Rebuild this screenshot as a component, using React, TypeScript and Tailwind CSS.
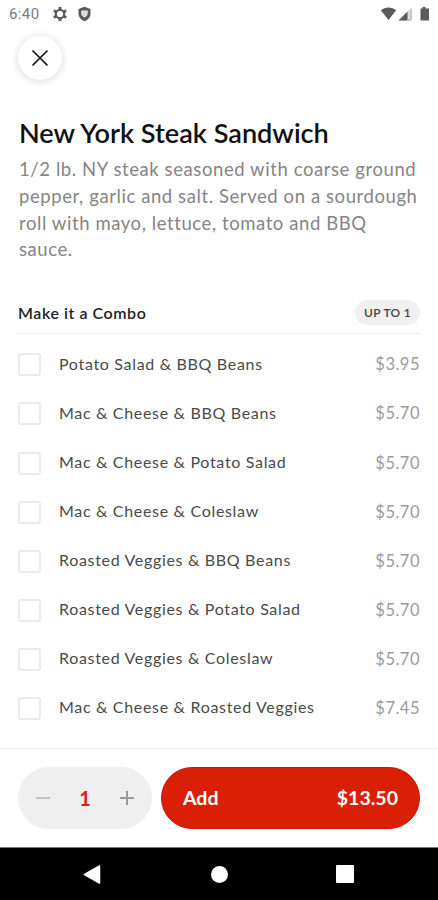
import React, { useState } from "react";

interface ComboOption {
  id: number;
  name: string;
  price: string;
}

const options: ComboOption[] = [
  { id: 1, name: "Potato Salad & BBQ Beans", price: "$3.95" },
  { id: 2, name: "Mac & Cheese & BBQ Beans", price: "$5.70" },
  { id: 3, name: "Mac & Cheese & Potato Salad", price: "$5.70" },
  { id: 4, name: "Mac & Cheese & Coleslaw", price: "$5.70" },
  { id: 5, name: "Roasted Veggies & BBQ Beans", price: "$5.70" },
  { id: 6, name: "Roasted Veggies & Potato Salad", price: "$5.70" },
  { id: 7, name: "Roasted Veggies & Coleslaw", price: "$5.70" },
  { id: 8, name: "Mac & Cheese & Roasted Veggies", price: "$7.45" },
];

const StatusBar: React.FC = () => (
  <div className="flex h-9 shrink-0 items-start justify-between pt-1.5 pl-[9px] pr-[7px] text-[#5c5c5c]">
    <div className="flex h-4 items-center">
      <span className="w-[43px] pt-px font-[Roboto,sans-serif] text-[15px] tracking-[0.4px] text-[#7c7c7c]">6:40</span>
      <svg className="h-4 w-4" viewBox="0 0 16 16" fill="none" stroke="currentColor">
        <circle cx="8" cy="8" r="4.2" strokeWidth="2.2" />
        <path
          d="M8 1v2.200M8 12.800V15M1.900 4.500l2 1.200M12.100 10.300l2 1.200M1.900 11.500l2-1.200M12.100 5.700l2-1.200"
          strokeWidth="3"
        />
      </svg>
      <svg className="ml-2 h-4 w-[17px]" viewBox="0 0 17 16">
        <path d="M8.500.8 14.500 3v4.500c0 3.700-2.500 6.400-6 7.700-3.500-1.300-6-4-6-7.700V3z" fill="currentColor" />
        <path d="M5.300 4.500h6.400v3c0 1.700-1.300 3.200-3.200 4-1.900-.8-3.200-2.300-3.200-4z" fill="#e6e6e6" />
        <path d="M8 5.800v3.400l2.500-1.700z" fill="#ffffff" stroke="#a0a0a0" strokeWidth="0.5" />
      </svg>
    </div>
    <svg className="h-4 w-[51px]" viewBox="0 0 51 16">
      <path d="M.8 4.300C4.800.4 12.200.4 16.200 4.300L8.500 14z" fill="currentColor" />
      <path d="M18.500 14.500 31.500 1.500v13z" fill="#dcdcdc" />
      <path d="M18.500 14.500 27.500 5.500v9z" fill="currentColor" />
      <path d="M30.500 3.500v11h1v-12zM27.500 13.500h4v1h-4z" fill="#a5a5a5" />
      <path d="M42.500 1h3v1.500H49v12h-8.500V2.500h2z" fill="currentColor" />
    </svg>
  </div>
);

const NavigationBar: React.FC = () => (
  <div className="flex h-[53px] shrink-0 items-center justify-between border-t border-[#777] bg-black pr-[84px] pl-[83px]">
    <svg className="h-[19px] w-[18px]" viewBox="0 0 18 19">
      <path d="M16.500 1 1.500 9.500l15 8.500z" fill="white" stroke="white" strokeWidth="1.500" strokeLinejoin="round" />
    </svg>
    <div className="ml-0.5 h-[17px] w-[17px] rounded-full bg-white" />
    <div className="h-[18px] w-[18px] rounded-[1px] bg-white" />
  </div>
);

const App: React.FC = () => {
  const [quantity, setQuantity] = useState(1);
  const [selected, setSelected] = useState<number | null>(null);

  return (
    <div className="flex h-[900px] w-[438px] flex-col overflow-hidden bg-white font-[Lato,sans-serif]">
      <StatusBar />
      <div className="flex flex-1 flex-col px-[18px]">
        <button
          className="flex h-11 w-11 items-center justify-center rounded-full bg-white shadow-[0_1px_10px_rgba(0,0,0,0.16)]"
          aria-label="Close"
        >
          <svg className="h-4 w-4" viewBox="0 0 16 16" stroke="#151515" strokeWidth="1.7" strokeLinecap="round">
            <path d="M1 1l14 14M15 1L1 15" />
          </svg>
        </button>

        <h1 className="mt-[37px] pl-px text-[27.100px] leading-8 font-semibold whitespace-nowrap text-[#111]">New York Steak Sandwich</h1>
        <p className="mt-[7px] pl-px text-[18.500px] leading-[26.800px] tracking-[0.580px] whitespace-nowrap text-[#858585]">
          1/2 lb. NY steak seasoned with coarse ground
          <br />
          pepper, garlic and salt. Served on a sourdough
          <br />
          roll with mayo, lettuce, tomato and BBQ
          <br />
          sauce.
        </p>

        <div className="mt-[36.600px] flex h-[34px] items-start justify-between border-b border-[#eeeeee]">
          <h2 className="text-base leading-[25px] font-semibold tracking-[0.550px] text-[#222]">Make it a Combo</h2>
          <span className="flex h-[25px] w-[65px] items-center justify-center rounded-full bg-[#f0f0f0] pt-px text-xs font-semibold tracking-[0.3px] text-[#444]">
            UP TO 1
          </span>
        </div>

        <ul className="mt-[6.600px]">
          {options.map((option) => (
            <li key={option.id} className="flex h-[49.070px] items-center">
              <button
                onClick={() => setSelected(selected === option.id ? null : option.id)}
                className="h-[23px] w-[23px] rounded-[3px] border-2 border-[#ebebeb]"
                aria-label={option.name}
                aria-pressed={selected === option.id}
              />
              <span className="ml-[18px] pb-[2px] text-base tracking-[0.680px] text-[#4a4a4a]">{option.name}</span>
              <span className="ml-auto pb-px text-[16.500px] leading-6 tracking-[0.5px] text-[#9a9a9a]">{option.price}</span>
            </li>
          ))}
        </ul>
      </div>

      <div className="flex h-[99px] shrink-0 items-start gap-[9px] border-t border-[#efefef] px-[18px] pt-[18px]">
        <div className="flex h-[62px] w-[134px] items-center justify-between rounded-full bg-[#efefef] px-[18px]">
          <button onClick={() => setQuantity(Math.max(1, quantity - 1))} aria-label="Remove one">
            <svg className="h-3.5 w-3.5" viewBox="0 0 14 14" stroke="#c4c4c4" strokeWidth="2">
              <path d="M0 7h14" />
            </svg>
          </button>
          <span className="text-xl font-bold text-[#d32118]">{quantity}</span>
          <button onClick={() => setQuantity(quantity + 1)} aria-label="Add one">
            <svg className="h-3.5 w-3.5" viewBox="0 0 14 14" stroke="#999" strokeWidth="2">
              <path d="M0 7h14M7 0v14" />
            </svg>
          </button>
        </div>
        <button className="flex h-[62px] flex-1 items-center justify-between rounded-full border border-[#cf120a] bg-[#da1f07] px-[21px] text-[19.500px] font-bold text-white">
          <span>Add</span>
          <span>$13.50</span>
        </button>
      </div>
      <NavigationBar />
    </div>
  );
};

export default App;
